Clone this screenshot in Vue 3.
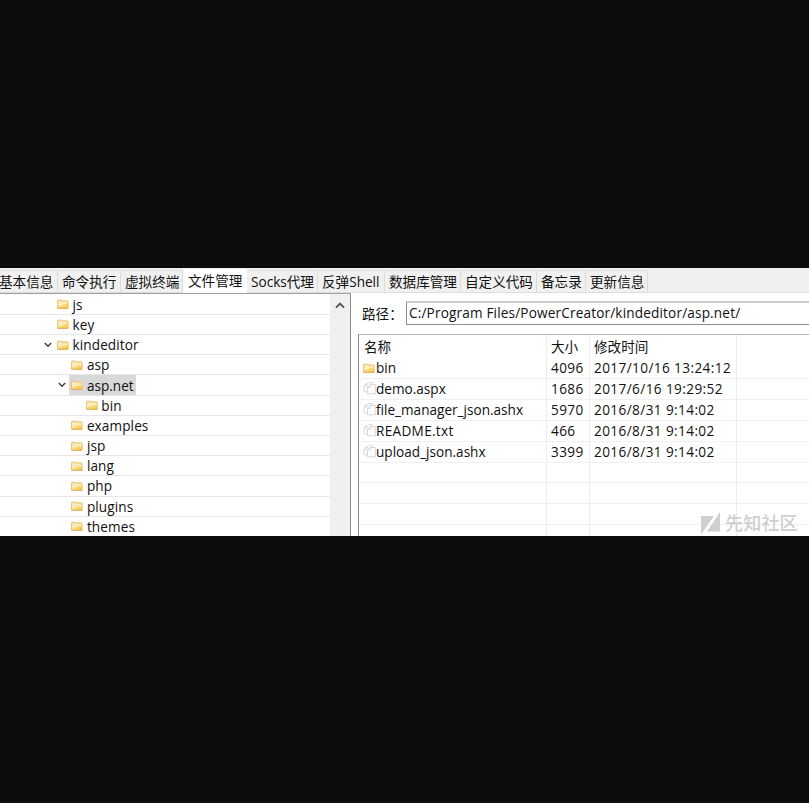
<script setup>
const tabs = [
  { label: '基本信息', width: 58 },
  { label: '命令执行', width: 63 },
  { label: '虚拟终端', width: 62 },
  { label: '文件管理', width: 64, active: true },
  { label: 'Socks代理', width: 71 },
  { label: '反弹Shell', width: 67 },
  { label: '数据库管理', width: 76 },
  { label: '自定义代码', width: 76 },
  { label: '备忘录', width: 49 },
  { label: '更新信息', width: 62 }
]
const tree = [
  { name: 'js', depth: 0 },
  { name: 'key', depth: 0 },
  { name: 'kindeditor', depth: 0, open: true },
  { name: 'asp', depth: 1 },
  { name: 'asp.net', depth: 1, open: true, selected: true },
  { name: 'bin', depth: 2 },
  { name: 'examples', depth: 1 },
  { name: 'jsp', depth: 1 },
  { name: 'lang', depth: 1 },
  { name: 'php', depth: 1 },
  { name: 'plugins', depth: 1 },
  { name: 'themes', depth: 1 }
]
const files = [
  { name: 'bin', size: '4096', time: '2017/10/16 13:24:12', dir: true },
  { name: 'demo.aspx', size: '1686', time: '2017/6/16 19:29:52' },
  { name: 'file_manager_json.ashx', size: '5970', time: '2016/8/31 9:14:02' },
  { name: 'README.txt', size: '466', time: '2016/8/31 9:14:02' },
  { name: 'upload_json.ashx', size: '3399', time: '2016/8/31 9:14:02' },
  {}, {}, {}, {}
]
</script>

<template>
  <svg class="defs" width="0" height="0">
    <defs>
      <linearGradient id="gold" x1="0" y1="0" x2="1" y2="1">
        <stop offset="0" stop-color="#fff0bd" />
        <stop offset="1" stop-color="#f3c43c" />
      </linearGradient>
      <symbol id="folder" viewBox="0 0 12 10">
        <path d="M.5 9.2V1.8Q.5 1 1.2 1H4.2L5 1.8H10.4Q11.2 1.8 11.2 2.5V9.2Z" fill="#f8e0a0" stroke="#e8bd76" stroke-width=".8" />
        <path d="M1 9V5.6H5L6.2 4.2H11V9Z" fill="url(#gold)" />
        <path d="M2 3.5H5M1.2 5.4H5L6.2 4.1H10" fill="none" stroke="#fffbe9" stroke-width=".9" />
        <path d="M.5 9.3H11.3" stroke="#e3a655" stroke-width=".9" />
      </symbol>
      <symbol id="file" viewBox="0 0 13 13">
        <path d="M4.5 2.5V1.5L5.5.6H9.5V2.5M4.3 9.8H1V3.5L3 1.8H4.5M1 4.2H3.4V2" fill="none" stroke="#d6d6d6" stroke-width=".9" />
        <path d="M4.5 5L7 2.5H12.3V11.8H4.5ZM4.5 5.4H7.2V2.6" fill="#fff" stroke="#d2d2d2" stroke-width=".9" />
      </symbol>
    </defs>
  </svg>
  <main class="screen">
    <section class="window">
      <nav class="tabs">
        <div v-for="t in tabs" :key="t.label" class="tab" :class="{ active: t.active }" :style="{ width: t.width + 'px' }">{{ t.label }}</div>
      </nav>
      <div class="body">
        <aside class="side">
          <div class="tree">
            <div v-for="n in tree" :key="n.name" class="node" :style="{ paddingLeft: 42 + n.depth * 14.4 + 'px' }">
              <span class="arrow">
                <svg v-if="n.open" width="8" height="6" viewBox="0 0 8 6"><path d="M.8 1L4 4.3L7.2 1" fill="none" stroke="#3c3c3c" stroke-width="1.4" /></svg>
              </span>
              <span class="item" :class="{ selected: n.selected }">
                <svg width="12" height="10"><use href="#folder" /></svg>
                <span class="name">{{ n.name }}</span>
              </span>
            </div>
          </div>
          <div class="scroll">
            <svg width="10" height="7" viewBox="0 0 10 7"><path d="M1 5.7L5 1.6L9 5.7" fill="none" stroke="#555" stroke-width="1.9" /></svg>
          </div>
        </aside>
        <section class="content">
          <div class="path">
            <label>路径：</label>
            <div class="input">C:/Program Files/PowerCreator/kindeditor/asp.net/</div>
          </div>
          <div class="table">
            <div class="row head"><div>名称</div><div>大小</div><div>修改时间</div><div></div></div>
            <div v-for="(f, i) in files" :key="i" class="row">
              <div class="fname">
                <svg v-if="f.dir" class="dir" width="12" height="10"><use href="#folder" /></svg>
                <svg v-else-if="f.name" width="13" height="13"><use href="#file" /></svg>
                <span :class="{ caps: f.name === 'README.txt' }">{{ f.name }}</span>
              </div>
              <div class="num">{{ f.size }}</div>
              <div class="num">{{ f.time }}</div>
              <div></div>
            </div>
          </div>
        </section>
      </div>
      <div class="watermark">
        <svg width="20" height="23" viewBox="0 0 20 23"><path d="M0 4H13L0 22.5ZM19 0V19.5H6Z" fill="#cfcfcf" /></svg>
        <span>先知社区</span>
      </div>
    </section>
  </main>
</template>

<style>
body { background: #0d0d0d; overflow: hidden; }
</style>
<style scoped>
.defs { position: absolute; }
.screen {
  box-sizing: border-box;
  height: 803px;
  padding-top: 268px;
  background: #0d0d0d;
  color: #111;
  font: 13.6px/20px "Open Sans", "Noto Sans CJK SC", sans-serif;
  white-space: nowrap;
}
.window { position: relative; height: 268px; overflow: hidden; background: #fff; }
.tabs { display: flex; box-sizing: border-box; height: 25px; padding-top: 2px; background: #f0f0f0; border-bottom: 1px solid #dcdcdc; }
.tab { box-sizing: border-box; flex: none; height: 22px; line-height: 21px; padding-left: 4px; border-right: 1px solid #dcdcdc; border-top: 1px solid #e2e2e2; }
.tab:first-child { padding-left: 0; text-indent: -1px; }
.tab.active { height: 24px; margin-top: -1px; padding-left: 5px; background: #fff; border-color: #fff; }
.body { display: flex; height: 243px; }
.side { display: flex; box-sizing: border-box; width: 351px; border-top: 1px solid #a0a0a0; border-right: 1px solid #8b8d94; }
.tree { width: 330px; padding-top: .7px; }
.node { display: flex; align-items: center; box-sizing: border-box; height: 20.2px; border-bottom: 1px solid #e6e6e6; letter-spacing: .1px; }
.node:last-child { border-bottom-color: transparent; }
.arrow { display: flex; width: 13px; padding-left: 2px; box-sizing: border-box; }
.item { display: flex; align-items: center; height: 20px; padding: 0 2px 0 2px; }
.item.selected { background: #d9d9d9; letter-spacing: 0; }
.name { margin-left: 3.5px; padding-top: 1px; }
.scroll { display: flex; justify-content: center; flex: 1; padding-top: 8px; background: #f0f0f0; }
.content { flex: 1; min-width: 0; padding: 8px 0 0 7px; }
.path { display: flex; height: 25px; }
.path label { width: 48px; padding: 3px 0 0 4px; box-sizing: border-box; }
.input { box-sizing: border-box; flex: 1; height: 24px; border: 1px solid #8b8d94; border-top: 2px solid #ccc; border-right: 0; padding-left: 2px; line-height: 20px; letter-spacing: .16px; }
.table { height: 210px; margin-top: 8px; border-top: 1px solid #b5b5bb; border-left: 1px solid #85878d; }
.row { display: grid; grid-template-columns: 188px 43px 147px 1fr; height: 20.9px; line-height: 19px; }
.row > div { box-sizing: border-box; padding-left: 4px; border-right: 1px solid #e8edf4; border-bottom: 1px solid #eef0f2; }
.row > div:last-child { border-right: 0; }
.row > .num { letter-spacing: .4px; }
.head { height: 23px; line-height: 24px; }
.head > div { border-bottom: 0; }
.head > div:first-child { padding-left: 5px; }
.row .fname { display: flex; align-items: center; }
.fname span { padding-bottom: 1px; }
.caps { letter-spacing: .3px; }
.dir { margin-right: 1px; }
.watermark { position: absolute; left: 701px; top: 243px; display: flex; align-items: center; gap: 4px; color: #cfcfcf; font-size: 18.2px; font-weight: 500; line-height: 24px; }
</style>
